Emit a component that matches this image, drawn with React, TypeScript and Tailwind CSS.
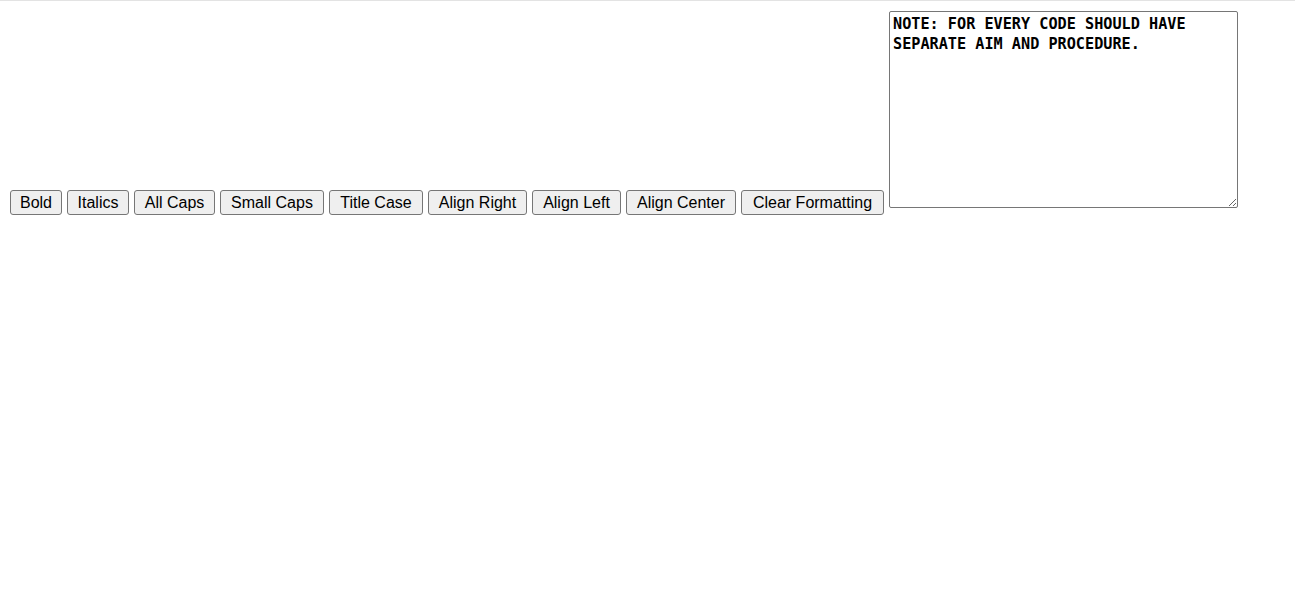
import { useState } from "react";

const actions = [
    { label: "Bold", width: "w-[52px]" },
    { label: "Italics", width: "w-[62px]" },
    { label: "All Caps", width: "w-[81px]" },
    { label: "Small Caps", width: "w-[104px]" },
    { label: "Title Case", width: "w-[94px]" },
    { label: "Align Right", width: "w-[99px]" },
    { label: "Align Left", width: "w-[89px]" },
    { label: "Align Center", width: "w-[110px]" },
    { label: "Clear Formatting", width: "w-[143px]" },
];

export default function App() {
    const [text, setText] = useState(
        "NOTE: FOR EVERY CODE SHOULD HAVE SEPARATE AIM AND PROCEDURE."
    );

    return (
        <div className="min-h-[605px] bg-white border-t border-[#e3e3e3]">
            <div className="flex items-end gap-[5px] pl-[10px] pt-[10px]">
                {actions.map((a) => (
                    <button
                        key={a.label}
                        type="button"
                        className={`${a.width} h-[25px] border border-[#767676] rounded-[3px] bg-[#efefef] text-black text-[16px] leading-[18px] font-['Liberation_Sans',Arial,sans-serif] whitespace-nowrap`}
                    >
                        {a.label}
                    </button>
                ))}

                <textarea
                    value={text}
                    onChange={(e) => setText(e.target.value)}
                    className="mb-[7px] w-[349px] h-[197px] border border-[#767676] rounded-[2px] px-[3px] pt-[3px] pb-[2px] text-black text-[15.2px] leading-[19.5px] font-bold font-['DejaVu_Sans_Mono',monospace] outline-none"
                />
            </div>
        </div>
    );
}
